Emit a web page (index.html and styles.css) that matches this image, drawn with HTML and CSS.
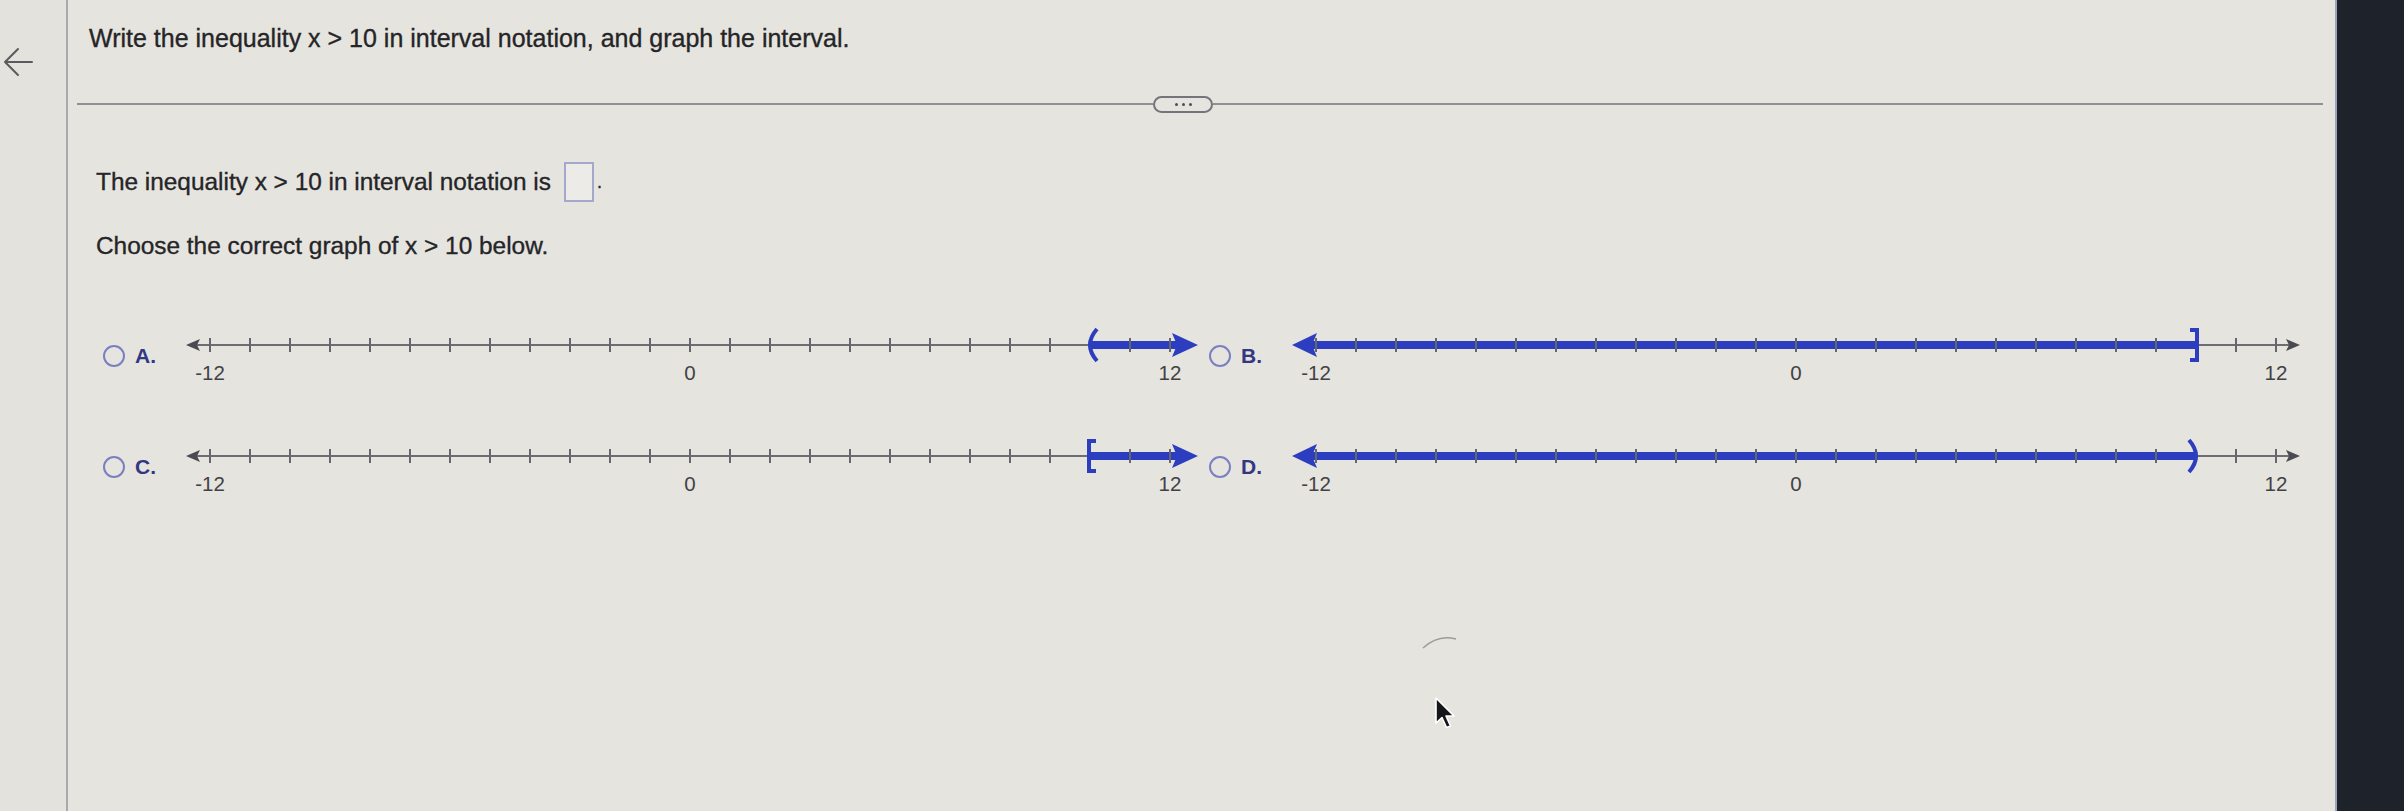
FILE: index.html
```html
<!DOCTYPE html>
<html lang="en">
<head>
<meta charset="utf-8">
<title>Interval notation</title>
<link rel="stylesheet" href="styles.css">
</head>
<body>
<div class="screen">
  <aside class="sidebar">
    <svg class="back" width="32" height="30" viewBox="0 0 32 30"><path d="M30 15H3M16 2L3 15L16 28" fill="none" stroke="#5b5b5e" stroke-width="2" stroke-linecap="round" stroke-linejoin="round"/></svg>
  </aside>
  <main class="panel">
    <header class="title">Write the inequality x &gt; 10 in interval notation, and graph the interval.</header>
    <div class="divider"><span class="more"><i></i><i></i><i></i></span></div>
    <section class="content">
      <p class="q1"><span>The inequality x &gt; 10 in interval notation is</span><span class="answer"></span><span class="dot">.</span></p>
      <p class="q2">Choose the correct graph of x &gt; 10 below.</p>
      <div class="options">
        <div class="option">
          <div class="pick"><span class="radio"></span><span class="letter">A.</span></div>
          <svg class="nl" width="1014" height="60" viewBox="0 0 1014 60">
            <path class="axis" d="M6 18H1000"/>
            <path class="head" d="M1 18L15 12L12 18L15 24Z"/>
            <path class="blue" d="M905 18H996"/>
            <path class="bhead" d="M1013 18L987 6L992 18L987 30Z"/>
            <path class="ticks" d="M25 11V25M65 11V25M105 11V25M145 11V25M185 11V25M225 11V25M265 11V25M305 11V25M345 11V25M385 11V25M425 11V25M465 11V25M505 11V25M545 11V25M585 11V25M625 11V25M665 11V25M705 11V25M745 11V25M785 11V25M825 11V25M865 11V25M945 11V25M985 11V25"/>
            <path class="end" d="M912 2Q898 18 912 34"/>
            <text x="25" y="53">-12</text><text x="505" y="53">0</text><text x="985" y="53">12</text>
          </svg>
        </div>
        <div class="option">
          <div class="pick"><span class="radio"></span><span class="letter">B.</span></div>
          <svg class="nl" width="1010" height="60" viewBox="0 0 1010 60">
            <path class="axis" d="M10 18H1000"/>
            <path class="head" d="M1009 18L995 12L998 18L995 24Z"/>
            <path class="blue" d="M17 18H905"/>
            <path class="bhead" d="M1 18L26 6L21 18L26 30Z"/>
            <path class="ticks" d="M25 11V25M65 11V25M105 11V25M145 11V25M185 11V25M225 11V25M265 11V25M305 11V25M345 11V25M385 11V25M425 11V25M465 11V25M505 11V25M545 11V25M585 11V25M625 11V25M665 11V25M705 11V25M745 11V25M785 11V25M825 11V25M865 11V25M945 11V25M985 11V25"/>
            <path class="end" d="M899 3H906V33H899"/>
            <text x="25" y="53">-12</text><text x="505" y="53">0</text><text x="985" y="53">12</text>
          </svg>
        </div>
        <div class="option">
          <div class="pick"><span class="radio"></span><span class="letter">C.</span></div>
          <svg class="nl" width="1014" height="60" viewBox="0 0 1014 60">
            <path class="axis" d="M6 18H1000"/>
            <path class="head" d="M1 18L15 12L12 18L15 24Z"/>
            <path class="blue" d="M905 18H996"/>
            <path class="bhead" d="M1013 18L987 6L992 18L987 30Z"/>
            <path class="ticks" d="M25 11V25M65 11V25M105 11V25M145 11V25M185 11V25M225 11V25M265 11V25M305 11V25M345 11V25M385 11V25M425 11V25M465 11V25M505 11V25M545 11V25M585 11V25M625 11V25M665 11V25M705 11V25M745 11V25M785 11V25M825 11V25M865 11V25M945 11V25M985 11V25"/>
            <path class="end" d="M911 3H904V33H911"/>
            <text x="25" y="53">-12</text><text x="505" y="53">0</text><text x="985" y="53">12</text>
          </svg>
        </div>
        <div class="option">
          <div class="pick"><span class="radio"></span><span class="letter">D.</span></div>
          <svg class="nl" width="1010" height="60" viewBox="0 0 1010 60">
            <path class="axis" d="M10 18H1000"/>
            <path class="head" d="M1009 18L995 12L998 18L995 24Z"/>
            <path class="blue" d="M17 18H905"/>
            <path class="bhead" d="M1 18L26 6L21 18L26 30Z"/>
            <path class="ticks" d="M25 11V25M65 11V25M105 11V25M145 11V25M185 11V25M225 11V25M265 11V25M305 11V25M345 11V25M385 11V25M425 11V25M465 11V25M505 11V25M545 11V25M585 11V25M625 11V25M665 11V25M705 11V25M745 11V25M785 11V25M825 11V25M865 11V25M945 11V25M985 11V25"/>
            <path class="end" d="M898 2Q912 18 898 34"/>
            <text x="25" y="53">-12</text><text x="505" y="53">0</text><text x="985" y="53">12</text>
          </svg>
        </div>
      </div>
    </section>
  </main>
  <div class="bezel"></div>
</div>
<svg class="spinner" width="40" height="20" viewBox="0 0 40 20"><path d="M3 16Q18 2 36 7" fill="none" stroke="#9c9c9c" stroke-width="1.5"/></svg>
<svg class="cursor" width="22" height="34" viewBox="0 0 22 34"><path d="M2 2L2 27L8 21.5L12.5 31.5L16.5 30L12 20L20 20Z" fill="#15161a" stroke="#ffffff" stroke-width="1.6" stroke-linejoin="round"/></svg>
</body>
</html>
```
FILE: styles.css
```css
html, body {
  margin: 0;
  padding: 0;
}
body {
  width: 2404px;
  height: 811px;
  overflow: hidden;
  position: relative;
  background: #e5e3de;
  font-family: "Liberation Sans", Arial, sans-serif;
  color: #252528;
}
.screen {
  display: flex;
  height: 811px;
}
.sidebar {
  width: 66px;
  flex: none;
  background: #e4e2dd;
  border-right: 2px solid #aaaaae;
}
.back {
  display: block;
  margin: 47px 0 0 2px;
}
.panel {
  flex: 1;
  background: #e6e4df;
  padding-top: 24px;
  min-width: 0;
}
.title {
  font-size: 25px;
  line-height: 28px;
  padding-left: 21px;
  color: #252527;
  -webkit-text-stroke: 0.35px currentColor;
}
.divider {
  display: flex;
  align-items: center;
  height: 18px;
  margin: 43px 12px 0 9px;
}
.divider::before {
  content: "";
  width: 1076px;
  height: 2px;
  background: #8e8e93;
}
.divider::after {
  content: "";
  flex: 1;
  height: 2px;
  background: #8e8e93;
}
.more {
  box-sizing: border-box;
  width: 60px;
  height: 17px;
  border: 2px solid #74747c;
  border-radius: 9px;
  display: flex;
  align-items: center;
  justify-content: center;
  gap: 4px;
}
.more i {
  width: 3px;
  height: 3px;
  border-radius: 50%;
  background: #4e4e58;
}
.content {
  padding-left: 28px;
}
.q1 {
  margin: 49px 0 0;
  display: flex;
  align-items: center;
  font-size: 24.4px;
  line-height: 28px;
  -webkit-text-stroke: 0.35px currentColor;
}
.answer {
  box-sizing: border-box;
  width: 30px;
  height: 40px;
  margin-left: 13px;
  border: 2px solid #a3a8cc;
  background: #ecebe8;
}
.dot {
  margin-left: 3px;
  font-size: 18px;
}
.q2 {
  margin: 30px 0 0;
  font-size: 24.4px;
  line-height: 28px;
  -webkit-text-stroke: 0.35px currentColor;
}
.options {
  display: grid;
  grid-template-columns: 1092px 1092px;
  column-gap: 14px;
  row-gap: 51px;
  margin: 67px 0 0 7px;
}
.option {
  display: flex;
  align-items: flex-start;
}
.pick {
  display: flex;
  align-items: center;
  gap: 10px;
  width: 82px;
  height: 22px;
  margin-top: 18px;
  flex: none;
}
.radio {
  box-sizing: border-box;
  width: 22px;
  height: 22px;
  border-radius: 50%;
  border: 2.5px solid #7a7fc2;
}
.letter {
  font-size: 21px;
  line-height: 22px;
  font-weight: bold;
  color: #323783;
}
.nl {
  display: block;
  flex: none;
}
.nl .axis {
  stroke: #6c6c72;
  stroke-width: 2;
  fill: none;
}
.nl .head {
  fill: #4a4a52;
}
.nl .ticks {
  stroke: #66666e;
  stroke-width: 2;
  fill: none;
}
.nl .blue {
  stroke: #2c3ebf;
  stroke-width: 8;
  fill: none;
}
.nl .bhead {
  fill: #2c3ebf;
}
.nl .end {
  stroke: #2c3ebf;
  stroke-width: 4;
  fill: none;
}
.nl text {
  font-family: "Liberation Sans", Arial, sans-serif;
  font-size: 20.5px;
  fill: #424246;
  text-anchor: middle;
}
.bezel {
  width: 69px;
  flex: none;
  background: #1d222b;
  box-shadow: inset 2px 0 0 #9aa4bc;
}
.spinner {
  position: absolute;
  left: 1420px;
  top: 632px;
}
.cursor {
  position: absolute;
  left: 1434px;
  top: 696px;
}
```
